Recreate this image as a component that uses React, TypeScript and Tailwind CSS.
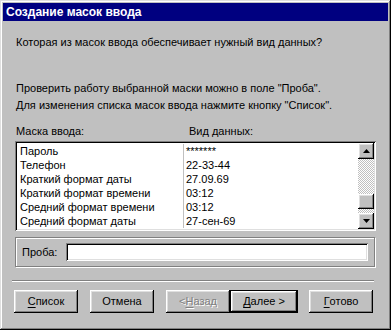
import React from 'react';

const raised =
  'shadow-[inset_-1px_-1px_#000,inset_1px_1px_#fff,inset_-2px_-2px_#808080,inset_2px_2px_#dfdfdf]';
const sunken =
  'shadow-[inset_1px_1px_#808080,inset_-1px_-1px_#fff,inset_2px_2px_#000,inset_-2px_-2px_#dfdfdf]';

const Button: React.FC<{ children: React.ReactNode; isDefault?: boolean; disabled?: boolean; w?: string }> = ({
  children,
  isDefault,
  disabled,
  w = 'w-[64px]',
}) => {
  const inner = (
    <div
      className={`${raised} bg-[#c0c0c0] h-full flex items-center justify-center ${
        disabled ? 'text-[#808080] [text-shadow:1px_1px_0_#fff]' : 'text-black'
      }`}
    >
      {children}
    </div>
  );
  if (isDefault) {
    return <div className={`${w} h-[23px] border border-black`}>{inner}</div>;
  }
  return <div className={`${w} h-[23px]`}>{inner}</div>;
};

const U: React.FC<{ children: React.ReactNode }> = ({ children }) => (
  <span className="underline underline-offset-[2px] decoration-1">{children}</span>
);

const rows: [string, string][] = [
  ['Пароль', '*******'],
  ['Телефон', '22-33-44'],
  ['Краткий формат даты', '27.09.69'],
  ['Краткий формат времени', '03:12'],
  ['Средний формат времени', '03:12'],
  ['Средний формат даты', '27-сен-69'],
];

const Arrow: React.FC<{ up?: boolean }> = ({ up }) => (
  <svg width="7" height="4" viewBox="0 0 7 4" className="block">
    {up ? <polygon points="3.5,0 7,4 0,4" fill="#000" /> : <polygon points="0,0 7,0 3.5,4" fill="#000" />}
  </svg>
);

export default function App() {
  return (
    <div
      className={`w-[391px] h-[330px] bg-[#c0c0c0] p-[3px] flex flex-col font-['Liberation_Sans',Arial,sans-serif] text-[11px] leading-[13px] text-black shadow-[inset_-1px_-1px_#000,inset_1px_1px_#dfdfdf,inset_-2px_-2px_#808080,inset_2px_2px_#fff]`}
    >
      {/* Title bar */}
      <div className="h-[18px] bg-[#000080] text-white font-bold text-[12px] flex items-center pl-[3px]">
        Создание масок ввода
      </div>

      <div className="flex-1 flex flex-col">
        <div className="ml-[13px] mt-[15px]">Которая из масок ввода обеспечивает нужный вид данных?</div>
        <div className="ml-[13px] mt-[33px]">Проверить работу выбранной маски можно в поле "Проба".</div>
        <div className="ml-[13px] mt-[4px]">Для изменения списка масок ввода нажмите кнопку "Список".</div>

        <div className="ml-[13px] mt-[13px] flex">
          <div className="w-[173px]">Маска ввода:</div>
          <div>Вид данных:</div>
        </div>

        {/* List box */}
        <div className={`ml-[12px] mt-[3px] w-[361px] h-[90px] bg-white ${sunken} p-[2px] flex`}>
          <div className="flex-1 overflow-hidden pt-[1px]">
            {rows.map(([a, b]) => (
              <div key={a} className="flex h-[14px] items-center">
                <div className="w-[167px] pl-[3px] border-r border-[#c0c0c0] h-full flex items-center">{a}</div>
                <div className="pl-[2px]">{b}</div>
              </div>
            ))}
          </div>
          <div className="w-[16px] flex flex-col">
            <div className={`h-[16px] bg-[#c0c0c0] ${raised} flex items-center justify-center`}>
              <Arrow up />
            </div>
            <div className="h-[35px] bg-[repeating-conic-gradient(#c0c0c0_0_25%,#fff_0_50%)] bg-[length:2px_2px]" />
            <div className={`h-[15px] bg-[#c0c0c0] ${raised}`} />
            <div className="flex-1 bg-[repeating-conic-gradient(#c0c0c0_0_25%,#fff_0_50%)] bg-[length:2px_2px]" />
            <div className={`h-[16px] bg-[#c0c0c0] ${raised} flex items-center justify-center`}>
              <Arrow />
            </div>
          </div>
        </div>

        {/* Group box */}
        <div className="ml-[12px] mt-[6px] w-[360px] h-[30px] border border-[#808080] shadow-[1px_1px_0_#fff,inset_1px_1px_0_#fff] flex items-center">
          <div className="ml-[6px] w-[44px]">Проба:</div>
          <div className={`w-[302px] h-[18px] bg-white ${sunken}`} />
        </div>

        {/* Separator */}
        <div className="ml-[9px] mt-[13px] w-[362px] h-[2px] border-t border-[#808080] border-b border-b-white" />

        {/* Buttons */}
        <div className="ml-[11px] mt-[8px] flex">
          <Button>
            <U>С</U>писок
          </Button>
          <div className="w-[12px]" />
          <Button>Отмена</Button>
          <div className="w-[12px]" />
          <Button disabled>
            &lt; <U>Н</U>азад
          </Button>
          <Button isDefault w="w-[68px]">
            <U>Д</U>алее &gt;
          </Button>
          <div className="w-[11px]" />
          <Button>
            <U>Г</U>отово
          </Button>
        </div>
      </div>
    </div>
  );
}
